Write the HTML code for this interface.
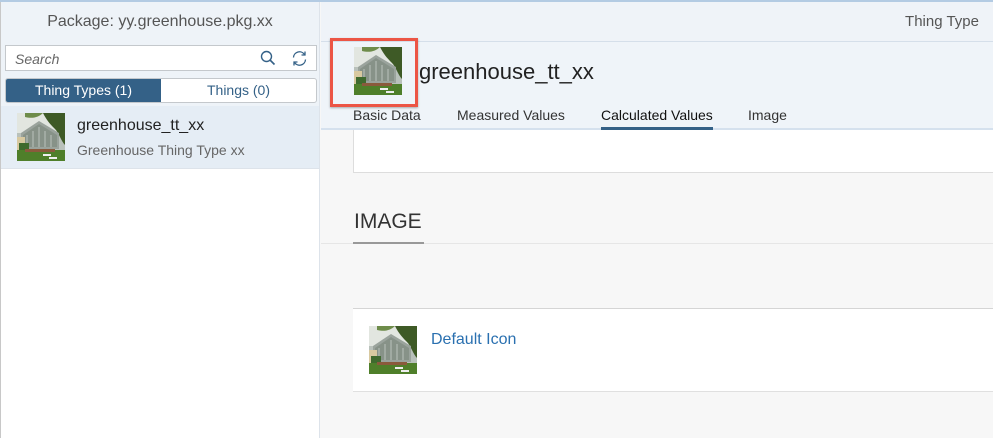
<!DOCTYPE html>
<html><head><meta charset="utf-8"><style>
*{box-sizing:border-box;margin:0;padding:0}
body{width:993px;height:438px;overflow:hidden;font-family:"Liberation Sans",Arial,sans-serif;background:#f7f7f7;position:relative}
.abs{position:absolute}
.topline{left:0;top:0;width:993px;height:2px;background:#b3cbe3}
.left{left:0;top:2px;width:320px;height:436px;background:#fff;border-left:1px solid #c8c8c8;border-right:1px solid #dde3ea}
.lhead{left:1px;top:2px;width:318px;height:40px;background:#eef3f8;text-align:center;font-size:16px;color:#555;line-height:40px}
.lsub{left:1px;top:42px;width:318px;height:127px;background:#eef3f8}
.search{left:5px;top:45px;width:312px;height:26px;background:#fff;border:1px solid #c4c8cc}
.search span{position:absolute;left:9px;top:5px;font-style:italic;font-size:14px;color:#666}
.seg{left:5px;top:78px;width:312px;height:25px;border:1px solid #c4c8cc;border-radius:3px;background:#fff;display:flex;overflow:hidden}
.seg div{flex:1;text-align:center;line-height:23px;font-size:14px;color:#346187}
.seg .on{background:#346187;color:#fff}
.item{left:1px;top:106px;width:318px;height:63px;background:#e5edf5;border-bottom:1px solid #dde3ea}
.t1{left:77px;top:117px;font-size:16px;color:#222}
.t2{left:77px;top:142px;font-size:14px;color:#666}
.rhead{left:321px;top:2px;width:672px;height:40px;background:#eff3f8;border-bottom:1px solid #d5dfea}
.rhead span{position:absolute;right:14px;top:11px;font-size:15px;color:#555}
.ohead{left:321px;top:42px;width:672px;height:88px;background:#eff4f9;border-bottom:2px solid #d5e1ee}
.title{left:419px;top:59px;font-size:22px;color:#222}
.tab{top:107px;font-size:14px;color:#333}
.tabline{left:601px;top:127px;width:112px;height:3px;background:#346187}
.wpanel{left:353px;top:130px;width:640px;height:43px;background:#fff;border-left:1px solid #ddd;border-bottom:1px solid #ddd}
.img{left:354px;top:210px;font-size:21px;color:#333}
.imgline{left:353px;top:242px;width:71px;height:2px;background:#999}
.sep{left:321px;top:243px;width:672px;height:1px;background:#e6e6e6}
.card{left:353px;top:308px;width:640px;height:84px;background:#fff;border-top:1px solid #d5d5d5;border-bottom:1px solid #e0e0e0}
.link{left:431px;top:331px;font-size:16px;color:#2a70b0}
.red{left:330px;top:38px;width:88px;height:69px;border:3px solid #ec5545;box-shadow:0 1px 2px rgba(0,0,0,.3)}
</style></head><body>
<svg width="0" height="0" style="position:absolute"><defs>
<symbol id="gh" viewBox="0 0 48 48">
<rect width="48" height="48" fill="#b9c1bb"/>
<rect width="48" height="20" fill="#e2e6e0"/>
<path d="M26 0h22v32c-4-4-6-12-10-16-4-4-8-8-12-16z" fill="#3e5a26"/>
<path d="M8 0h18c-4 4-10 6-18 4z" fill="#6e8c4a"/>
<path d="M4 36V20l18-12 20 12v16z" fill="#9aa39c"/>
<path d="M6 34V22l16-11 18 11v12z" fill="#7f8a80" opacity=".7"/>
<path d="M10 22v12M16 18v16M22 14v20M28 18v16M34 22v12" stroke="#c8cec8" stroke-width=".8"/>
<path d="M0 24h8v14H0z" fill="#d8c9a0"/>
<rect x="2" y="30" width="10" height="8" fill="#3f6a2e"/>
<rect x="0" y="37" width="48" height="11" fill="#4f7f2a"/>
<rect x="8" y="36" width="30" height="3" fill="#8a5a3c"/>
<rect x="26" y="41" width="8" height="2" fill="#eee"/>
<rect x="32" y="44" width="8" height="2" fill="#eee"/>
</symbol></defs></svg>
<div class="abs topline"></div>
<div class="abs left"></div>
<div class="abs lhead">Package: yy.greenhouse.pkg.xx</div>
<div class="abs lsub"></div>
<div class="abs search"><span>Search</span>
<svg style="position:absolute;left:254px;top:4px" width="16" height="16" viewBox="0 0 16 16"><circle cx="6.5" cy="6.5" r="5" fill="none" stroke="#346187" stroke-width="1.4"/><path d="M10 10l4.5 4.5" stroke="#346187" stroke-width="1.6"/></svg>
<svg style="position:absolute;left:285px;top:4px" width="17" height="17" viewBox="0 0 17 17"><path d="M2.5 7.5A6 6 0 0 1 13.5 4.5M14.5 9.5A6 6 0 0 1 3.5 12.5" fill="none" stroke="#346187" stroke-width="1.3"/><path d="M14 1.5v3.5h-3.5M3 15.5V12h3.5" fill="none" stroke="#346187" stroke-width="1.3"/></svg>
</div>
<div class="abs seg"><div class="on">Thing Types (1)</div><div>Things (0)</div></div>
<div class="abs item"></div>
<svg class="abs" style="left:17px;top:113px" width="48" height="48"><use href="#gh"/></svg>
<div class="abs t1">greenhouse_tt_xx</div>
<div class="abs t2">Greenhouse Thing Type xx</div>
<div class="abs rhead"><span>Thing Type</span></div>
<div class="abs ohead"></div>
<svg class="abs" style="left:354px;top:47px" width="48" height="48"><use href="#gh"/></svg>
<div class="abs red"></div>
<div class="abs title">greenhouse_tt_xx</div>
<div class="abs tab" style="left:353px">Basic Data</div>
<div class="abs tab" style="left:457px">Measured Values</div>
<div class="abs tab" style="left:601px;color:#111">Calculated Values</div>
<div class="abs tab" style="left:748px">Image</div>
<div class="abs tabline"></div>
<div class="abs wpanel"></div>
<div class="abs img">IMAGE</div>
<div class="abs sep"></div>
<div class="abs imgline"></div>
<div class="abs card"></div>
<svg class="abs" style="left:369px;top:326px" width="48" height="48"><use href="#gh"/></svg>
<div class="abs link">Default Icon</div>
</body></html>
